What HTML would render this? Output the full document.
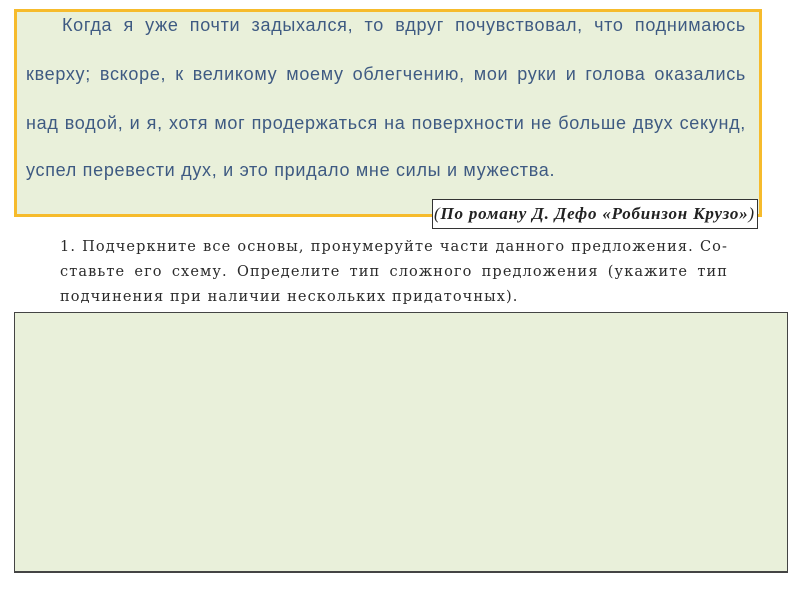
<!DOCTYPE html>
<html><head><meta charset="utf-8"><style>
body{margin:0;width:800px;height:600px;background:#fff;position:relative;overflow:hidden}
.top{position:absolute;left:14px;top:9px;width:742px;height:202px;border:3px solid #f6bb2c;background:#e9f0da;box-sizing:content-box}
.t{position:absolute;left:26px;font:18px "Liberation Sans",sans-serif;letter-spacing:0.7px;color:#3e5a82;white-space:nowrap;width:720px;text-align:justify;text-align-last:justify}
.cite{position:absolute;left:432px;top:199px;width:326px;height:30px;border:1px solid #333;background:#fff;box-sizing:border-box;font:italic 17px "Liberation Serif",serif;letter-spacing:0.8px;color:#222;line-height:28px;padding-left:1px;white-space:nowrap}
.q{position:absolute;left:60px;width:668px;font:14.5px "DejaVu Serif",serif;letter-spacing:1.1px;color:#2a2a2a;white-space:nowrap;text-align:justify;text-align-last:justify}
.bot{position:absolute;left:14px;top:312px;width:774px;height:261px;border:1px solid #444;border-bottom-width:2px;background:#e9f0da;box-sizing:border-box}
</style></head><body>
<div class="top"></div>
<div class="t" style="top:15px;left:62px;width:684px">Когда я уже почти задыхался, то вдруг почувствовал, что поднимаюсь</div>
<div class="t" style="top:64px">кверху; вскоре, к великому моему облегчению, мои руки и голова оказались</div>
<div class="t" style="top:113px">над водой, и я, хотя мог продержаться на поверхности не больше двух секунд,</div>
<div class="t" style="top:160px;text-align-last:left">успел перевести дух, и это придало мне силы и мужества.</div>
<div class="cite">(<b>По роману Д. Дефо «Робинзон Крузо»</b>)</div>
<div class="q" style="top:239px">1. Подчеркните все основы, пронумеруйте части данного предложения. Со-</div>
<div class="q" style="top:264px">ставьте его схему. Определите тип сложного предложения (укажите тип</div>
<div class="q" style="top:289px;text-align-last:left">подчинения при наличии нескольких придаточных).</div>
<div class="bot"></div>
</body></html>
